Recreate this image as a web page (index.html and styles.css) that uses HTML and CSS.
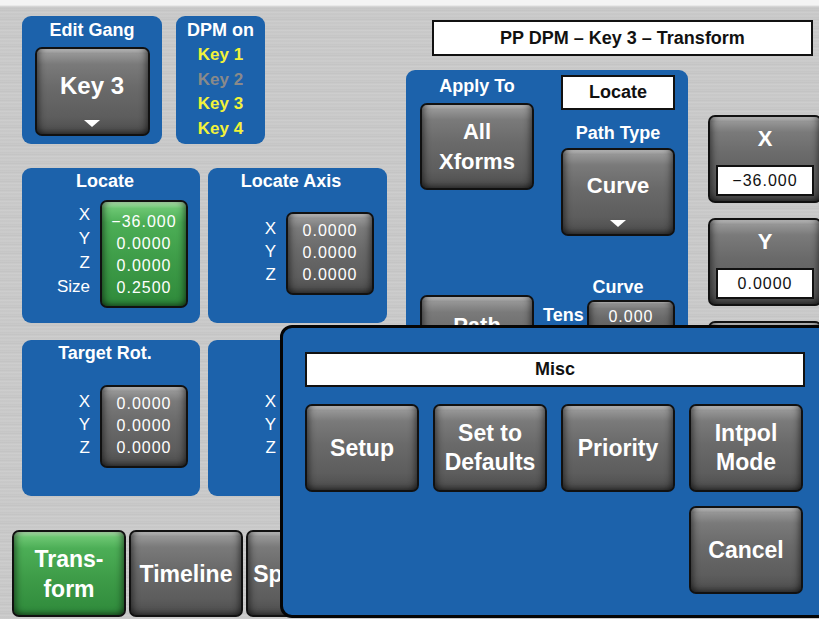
FILE: index.html
```html
<!DOCTYPE html>
<html lang="en">
<head>
  <meta charset="UTF-8">
  <title>PP DPM - Key 3 - Transform</title>
  <link rel="stylesheet" href="styles.css">
</head>
<body>

<div class="screen">

  <div class="left-col">
    <div class="row top-row">
      <section class="panel gang">
        <h2>Edit Gang</h2>
        <div class="btn gang-btn">
          <span>Key 3</span>
          <span class="drop"></span>
        </div>
      </section>
      <section class="panel dpm">
        <h2>DPM on</h2>
        <p class="on">Key 1</p>
        <p class="off">Key 2</p>
        <p class="on">Key 3</p>
        <p class="on">Key 4</p>
      </section>
    </div>

    <div class="row mid-row">
      <section class="panel readout">
        <h2>Locate</h2>
        <div class="readout-body">
          <div class="axis-labels four">
            <span>X</span><span>Y</span><span>Z</span><span>Size</span>
          </div>
          <div class="btn values green">
            <span>&minus;36.000</span><span>0.0000</span><span>0.0000</span><span>0.2500</span>
          </div>
        </div>
      </section>
      <section class="panel readout wide">
        <h2>Locate Axis</h2>
        <div class="readout-body">
          <div class="axis-labels">
            <span>X</span><span>Y</span><span>Z</span>
          </div>
          <div class="btn values">
            <span>0.0000</span><span>0.0000</span><span>0.0000</span>
          </div>
        </div>
      </section>
    </div>

    <div class="row low-row">
      <section class="panel readout">
        <h2>Target Rot.</h2>
        <div class="readout-body">
          <div class="axis-labels">
            <span>X</span><span>Y</span><span>Z</span>
          </div>
          <div class="btn values">
            <span>0.0000</span><span>0.0000</span><span>0.0000</span>
          </div>
        </div>
      </section>
      <!-- this one sits under the Misc popup, only its labels show -->
      <section class="panel readout wide">
        <h2>&nbsp;</h2>
        <div class="readout-body">
          <div class="axis-labels">
            <span>X</span><span>Y</span><span>Z</span>
          </div>
          <div class="btn values blank"></div>
        </div>
      </section>
    </div>

    <nav class="tabs">
      <div class="btn tab green">Trans-<br>form</div>
      <div class="btn tab">Timeline</div>
      <div class="btn tab">Spotlight</div>
    </nav>
  </div>

  <div class="right-col">
    <div class="white-box title-box">PP DPM &ndash; Key 3 &ndash; Transform</div>
    <div class="right-body">
      <section class="panel apply">
        <div class="apply-col">
          <h2 class="apply-label">Apply To</h2>
          <div class="btn big-btn xforms">All<br>Xforms</div>
          <div class="btn big-btn path">Path</div>
        </div>
        <div class="apply-col">
          <div class="white-box locate-box">Locate</div>
          <h2 class="path-label">Path Type</h2>
          <div class="btn big-btn curve-btn">
            <span>Curve</span>
            <span class="drop"></span>
          </div>
          <h2 class="curve-label">Curve</h2>
          <div class="tens-row">
            <span class="tens-label">Tens</span>
            <div class="btn tens-btn">0.000</div>
          </div>
        </div>
      </section>
      <div class="axis-col">
        <div class="btn axis-btn">
          <span>X</span>
          <div class="white-box axis-value">&minus;36.000</div>
        </div>
        <div class="btn axis-btn">
          <span>Y</span>
          <div class="white-box axis-value">0.0000</div>
        </div>
        <div class="btn axis-btn"></div>
      </div>
    </div>
  </div>

  <div class="popup">
    <div class="white-box misc-box">Misc</div>
    <div class="popup-grid">
      <div class="btn pop-btn">Setup</div>
      <div class="btn pop-btn">Set to<br>Defaults</div>
      <div class="btn pop-btn">Priority</div>
      <div class="btn pop-btn">Intpol<br>Mode</div>
      <div class="btn pop-btn cancel">Cancel</div>
    </div>
  </div>

</div>

</body>
</html>
```

FILE: styles.css
```css
* {
  box-sizing: border-box;
}

body {
  margin: 0;
  width: 819px;
  height: 619px;
  overflow: hidden;
  font-family: "Liberation Sans", Arial, sans-serif;
  color: white;
}

h2, p {
  margin: 0;
}

.screen {
  position: relative;
  display: flex;
  width: 819px;
  height: 619px;
  background:
    linear-gradient(180deg, #f4f4f4 0, #f4f4f4 5px, rgba(255, 255, 255, 0) 7px),
    repeating-linear-gradient(180deg, #cbcbcb 0, #c2c2c2 2px, #d0d0d0 3px, #c6c6c6 5px, #cdcdcd 7px, #c4c4c4 9px);
}

/* panels */

.panel {
  background: #1c62ab;
  border-radius: 9px;
}

.panel h2 {
  font-size: 18px;
  font-weight: bold;
  text-align: center;
  line-height: 26px;
}

.left-col {
  width: 387px;
  padding: 16px 0 0 22px;
}

.row {
  display: flex;
}

.top-row {
  gap: 14px;
  height: 128px;
}

.gang {
  width: 140px;
  padding-top: 1px;
}

.dpm {
  width: 89px;
  padding-top: 1px;
}

.dpm p {
  font-size: 17px;
  font-weight: bold;
  text-align: center;
  line-height: 24.5px;
}

.dpm .on {
  color: #f2f23a;
}

.dpm .off {
  color: #8a8a8a;
}

.mid-row {
  gap: 8px;
  height: 155px;
  margin-top: 24px;
}

.low-row {
  gap: 8px;
  height: 156px;
  margin-top: 17px;
}

.readout {
  width: 178px;
  display: flex;
  flex-direction: column;
  padding: 0 12px 10px 0;
}

.readout.wide {
  width: 179px;
  padding-right: 13px;
}

.readout-body {
  flex: 1;
  display: flex;
  justify-content: flex-end;
  align-items: center;
  gap: 10px;
}

.axis-labels {
  display: flex;
  flex-direction: column;
  align-items: flex-end;
  font-size: 17px;
  line-height: 23px;
  margin-top: -4px;
}

.axis-labels.four {
  line-height: 24px;
  margin-top: -6px;
}

/* buttons */

.btn {
  border: 2px solid #111;
  border-radius: 7px;
  background: linear-gradient(180deg, #cfcfcf 0, #979797 5%, #7a7a7a 18%, #6a6a6a 45%, #5d5d5d 80%, #4c4c4c 100%);
  box-shadow: inset 5px 0 7px -3px rgba(0, 0, 0, 0.45), inset -5px 0 7px -3px rgba(0, 0, 0, 0.45), inset 0 -4px 6px -2px rgba(0, 0, 0, 0.35);
  color: white;
  font-weight: bold;
  text-align: center;
}

.btn.green {
  background: linear-gradient(180deg, #b6e8b4 0, #6cc672 6%, #4cae56 20%, #3e9c48 55%, #2f8a3b 100%);
}

.big-btn {
  font-size: 22px;
  line-height: 30px;
}

.gang-btn {
  width: 115px;
  height: 89px;
  margin: 4px auto 0;
  padding-bottom: 12px;
  display: flex;
  flex-direction: column;
  align-items: center;
  justify-content: center;
  font-size: 24px;
  position: relative;
}

.drop {
  position: absolute;
  left: 50%;
  bottom: 7px;
  margin-left: -8px;
  border-left: 8px solid transparent;
  border-right: 8px solid transparent;
  border-top: 7px solid white;
}

.values {
  width: 88px;
  display: flex;
  flex-direction: column;
  font-size: 16px;
  font-weight: normal;
  letter-spacing: 1px;
  line-height: 22px;
  padding: 6px 0 7px;
}

.values.green {
  padding: 9px 0 7px;
}

.values.blank {
  height: 81px;
}

.tabs {
  display: flex;
  gap: 3px;
  margin: 34px 0 0 -10px;
}

.tab {
  width: 114px;
  height: 87px;
  display: flex;
  align-items: center;
  justify-content: center;
  font-size: 23px;
  line-height: 30px;
  white-space: nowrap;
  overflow: hidden;
}

/* right side */

.right-col {
  margin-left: 19px;
  padding-top: 20px;
}

.white-box {
  background: white;
  border: 2px solid #111;
  color: #111;
  font-weight: bold;
  text-align: center;
}

.title-box {
  width: 381px;
  height: 36px;
  margin-left: 26px;
  font-size: 18px;
  line-height: 32px;
}

.right-body {
  display: flex;
  margin-top: 14px;
}

.apply {
  width: 282px;
  height: 330px;
  display: flex;
  gap: 27px;
  padding: 0 13px 0 14px;
}

.apply-col {
  width: 114px;
  display: flex;
  flex-direction: column;
}

.apply-label {
  margin-top: 3px;
}

.xforms {
  height: 87px;
  padding-top: 12px;
  margin-top: 4px;
}

.path {
  height: 88px;
  margin-top: 105px;
  padding-top: 14px;
}

.locate-box {
  height: 35px;
  margin-top: 5px;
  font-size: 18px;
  line-height: 31px;
}

.path-label {
  margin-top: 10px;
}

.curve-btn {
  position: relative;
  height: 88px;
  margin-top: 2px;
  padding-top: 21px;
}

.curve-label {
  margin-top: 38px;
}

.tens-row {
  display: flex;
  align-items: flex-start;
  gap: 3px;
  margin-left: -18px;
}

.tens-label {
  width: 41px;
  font-size: 18px;
  font-weight: bold;
  line-height: 28px;
  margin-top: 1px;
}

.tens-btn {
  width: 88px;
  height: 40px;
  font-size: 16px;
  font-weight: normal;
  letter-spacing: 1px;
  padding-top: 6px;
}

.axis-col {
  display: flex;
  flex-direction: column;
  gap: 15px;
  margin-left: 20px;
  padding-top: 45px;
}

.axis-btn {
  width: 114px;
  height: 88px;
  padding: 6px 6px 0;
  font-size: 22px;
  line-height: 32px;
}

.axis-value {
  height: 31px;
  margin-top: 10px;
  font-size: 16px;
  font-weight: normal;
  letter-spacing: 1px;
  line-height: 27px;
}

/* popup */

.popup {
  position: absolute;
  left: 280px;
  top: 325px;
  width: 560px;
  height: 293px;
  background: #1c62ab;
  border: 3px solid #050505;
  border-radius: 12px;
  padding: 24px 0 0 22px;
}

.misc-box {
  width: 500px;
  height: 35px;
  font-size: 18px;
  line-height: 31px;
}

.popup-grid {
  display: grid;
  grid-template-columns: repeat(4, 114px);
  grid-auto-rows: 88px;
  gap: 14px;
  margin-top: 17px;
}

.pop-btn {
  display: flex;
  align-items: center;
  justify-content: center;
  font-size: 23px;
  line-height: 29px;
}

.cancel {
  grid-column: 4;
}
```
